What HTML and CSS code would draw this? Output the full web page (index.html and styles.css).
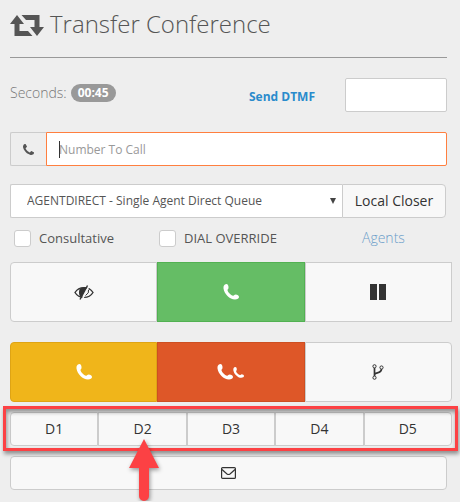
FILE: index.html
```html
<!DOCTYPE html>
<html lang="en">
<head>
    <meta charset="UTF-8">
    <meta name="viewport" content="width=device-width, initial-scale=1.0">
    <title>Transfer Conference</title>
    <link rel="stylesheet" href="styles.css">
</head>
<body>
    <svg class="sprite" aria-hidden="true">
        <symbol id="phone" viewBox="192 128 1408 1408">
            <path d="M1600 1240q0 27-10 70.5t-21 68.5q-21 50-122 106-94 51-186 51-27 0-53-3.5t-57.5-12.5-47-14.5-55.5-20.5-49-18q-98-35-175-83-127-79-264-216t-216-264q-48-77-83-175-3-9-18-49t-20.5-55.5-14.5-47-12.5-57.5-3.5-53q0-92 51-186 56-101 106-122 25-11 68.5-21t70.5-10q14 0 21 3 18 6 53 76 11 19 30 54t35 63.5 31 53.5q3 4 17.5 25t21.5 35.5 7 28.5q0 20-28.5 50t-62 55-62 53-28.5 46q0 9 5 22.5t8.5 20.5 14 24 11.5 19q76 137 174 235t235 174q2 1 19 11.5t24 14 20.5 8.5 22.5 5q18 0 46-28.5t53-62 55-62 50-28.5q14 0 28.5 7t35.5 21.5 25 17.5q25 15 53.5 31t63.5 35 54 30q70 35 76 53 3 7 3 21z"/>
        </symbol>
        <symbol id="handset" viewBox="0 0 16 16">
            <path d="M3.300 0C1.200.3.200 2 .5 4.600 1.200 9.800 6.600 15.600 12 15.600c2.300 0 4-.9 4-2.500 0-1.300-1.600-2.500-3.300-2.500-1.300 0-1.600 1.300-2.600 1.200C7.700 11.400 5 8.300 4.500 6.300c-.2-1 .9-1.200 1-2.400C5.700 2 4.900 0 3.300 0z"/>
        </symbol>
    </svg>

    <main class="panel">
        <h1 class="title">
            <svg class="title-icon" viewBox="0 0 34 21">
                <path d="M7 0l7 9H9.500v7H18l4.500 5H4.500V9H0z"/>
                <path d="M11.500 0H29.500v12H34l-7 9-7-9h4.500V5H16z"/>
            </svg>
            Transfer Conference
        </h1>

        <div class="timer-row">
            <div class="timer">Seconds: <span class="badge">00:45</span></div>
            <a class="dtmf-link" href="#">Send DTMF</a>
            <input class="dtmf-input" type="text" aria-label="DTMF digits">
        </div>

        <div class="number-row">
            <label class="addon" for="number" aria-label="Number To Call">
                <svg class="icon-small"><use href="#phone"/></svg>
            </label>
            <div class="number-box">
                <input class="number-input" type="text" id="number" placeholder="Number To Call">
                <span class="caret"></span>
            </div>
        </div>

        <div class="queue-row">
            <div class="queue-box">
                <select class="queue-select" aria-label="Transfer group">
                    <option>AGENTDIRECT - Single Agent Direct Queue</option>
                </select>
            </div>
            <button class="btn closer-btn" type="button">Local Closer</button>
        </div>

        <div class="options">
            <label class="check"><input type="checkbox"> Consultative</label>
            <label class="check"><input type="checkbox"> DIAL OVERRIDE</label>
            <a class="agents-link" href="#">Agents</a>
        </div>

        <div class="actions">
            <button class="btn first" type="button" aria-label="Leave blind">
                <svg class="icon-eye" viewBox="0 0 20 15">
                    <path class="line" d="M1 7.500C5 1 15 1 19 7.500 15 14 5 14 1 7.500z" stroke-width="1.400"/>
                    <path d="M5.500 4.500C7 2.500 10 2 12.500 2.500L7 12.500C5 11 4.500 7 5.500 4.500z"/>
                    <path class="gap" d="M15.500 0L8 15" stroke-width="1.600"/>
                    <path class="line" d="M13.500.5L6 14.500" stroke-width="1.400"/>
                    <path class="line" d="M14.500 5q1 3-3 5.500" stroke-width="1"/>
                </svg>
            </button>
            <button class="btn green" type="button" aria-label="Dial with customer">
                <svg class="icon"><use href="#handset"/></svg>
            </button>
            <button class="btn" type="button" aria-label="Park customer and dial">
                <svg class="icon" viewBox="0 0 16 16"><path d="M0 0h7v16H0zM9 0h7v16H9z"/></svg>
            </button>
        </div>

        <div class="actions">
            <button class="btn first yellow" type="button" aria-label="Hangup transfer line">
                <svg class="icon"><use href="#handset"/></svg>
            </button>
            <button class="btn orange" type="button" aria-label="Hangup both lines">
                <svg class="icon"><use href="#handset"/></svg>
                <svg class="icon-small"><use href="#handset"/></svg>
            </button>
            <button class="btn last" type="button" aria-label="Leave 3-way call">
                <svg class="icon-fork" viewBox="0 0 12 16">
                    <path class="line" d="M2.500 4v8M9.500 5c0 5-7 3-7 6" stroke-width="1.700"/>
                    <circle class="ring" cx="2.500" cy="2.300" r="1.600"/>
                    <circle class="ring" cx="2.500" cy="13.700" r="1.600"/>
                    <circle class="ring" cx="9.500" cy="3.500" r="1.600"/>
                </svg>
            </button>
        </div>

        <div class="presets">
            <button class="btn" type="button">D1</button>
            <button class="btn" type="button">D2</button>
            <button class="btn" type="button">D3</button>
            <button class="btn" type="button">D4</button>
            <button class="btn" type="button">D5</button>
            <span class="highlight"></span>
            <svg class="arrow" viewBox="0 0 30 62">
                <path d="M15 0l15 29H20v28a5 5 0 0 1-10 0V29H0z"/>
            </svg>
        </div>

        <button class="btn mail-btn" type="button" aria-label="Voicemail message">
            <svg class="icon-mail" viewBox="0 0 15 12">
                <rect class="line" x=".6" y=".6" width="13.800" height="10.800" rx="1" stroke-width="1.200"/>
                <path class="line" d="M1 2.500l5 4.500q1.500 1 3 0l5-4.500" stroke-width="1.200"/>
            </svg>
        </button>
    </main>
</body>
</html>
```

FILE: styles.css
```css
* {
    margin: 0;
    padding: 0;
    box-sizing: border-box;
}

body {
    background: #eee;
    color: #555;
    font-family: 'Open Sans', sans-serif;
    font-size: 14px;
    line-height: 20px;
}

input,
select,
button {
    font: inherit;
    color: inherit;
}

svg {
    fill: currentColor;
    flex: none;
}

.line {
    fill: none;
    stroke: currentColor;
}

.ring {
    fill: #f8f8f8;
    stroke: currentColor;
}

.gap {
    fill: none;
    stroke: #f8f8f8;
}

a {
    color: #2a8bcc;
    text-decoration: none;
}

.sprite {
    display: none;
}

.panel {
    padding: 8px 8px 11px 10px;
}

.title {
    display: flex;
    align-items: center;
    gap: 6px;
    height: 50px;
    margin-right: 5px;
    padding-bottom: 18px;
    border-bottom: 1px solid #999;
    font-size: 24px;
    font-weight: 300;
}

.title-icon {
    width: 34px;
    height: 21px;
    margin-top: 3px;
}

.timer-row {
    display: flex;
    align-items: center;
    margin: 20px 5px 0 0;
}

.timer {
    flex: 1;
    align-self: flex-start;
    display: flex;
    align-items: center;
    gap: 4px;
    padding-top: 5px;
    color: #777;
    font-weight: 300;
}

.badge {
    padding: 0 7px;
    border-radius: 9px;
    background: #999;
    color: #fff;
    font-size: 12px;
    font-weight: 700;
    line-height: 18px;
}

.dtmf-link {
    margin: 4px 30px 0 0;
    font-size: 12px;
    font-weight: 700;
}

.dtmf-input {
    width: 102px;
    height: 34px;
    padding: 0 10px;
    border: 1px solid #ccc;
    border-radius: 2px;
    background: #fff;
}

.number-row {
    display: flex;
    margin: 20px 5px 0 0;
}

.addon {
    display: flex;
    align-items: center;
    justify-content: center;
    width: 36px;
    border: 1px solid #ccc;
    border-right: 0;
    border-radius: 2px 0 0 2px;
}

.number-box {
    position: relative;
    flex: 1;
}

.number-input {
    display: block;
    width: 100%;
    height: 34px;
    padding: 0 12px;
    border: 1px solid #ff7f3f;
    border-radius: 0 2px 2px 0;
    background: #fff;
    font-size: 12px;
}

.number-input::placeholder {
    color: #999;
}

.caret {
    position: absolute;
    top: 9px;
    left: 13px;
    width: 1px;
    height: 17px;
    background: #333;
}

.btn {
    display: flex;
    align-items: center;
    justify-content: center;
    border: 1px solid #ccc;
    background: #f8f8f8;
    color: #333;
    cursor: pointer;
}

.queue-row {
    display: flex;
    margin: 18px 6px 0 0;
}

.queue-box {
    position: relative;
    flex: 1;
}

.queue-box::after {
    content: "";
    position: absolute;
    top: 14px;
    right: 6px;
    border: 3px solid transparent;
    border-top: 6px solid #444;
    border-bottom: 0;
}

.queue-select {
    appearance: none;
    display: block;
    width: 100%;
    height: 34px;
    padding: 0 16px;
    border: 1px solid #ccc;
    border-right: 0;
    border-radius: 2px 0 0 2px;
    background: #fff;
    font-size: 12px;
}

.closer-btn {
    width: 104px;
    border-radius: 0 4px 4px 0;
}

.options {
    display: grid;
    grid-template-columns: 145px 1fr 90px;
    align-items: center;
    margin-top: 10px;
    padding-left: 4px;
}

.check {
    display: flex;
    align-items: center;
    gap: 8px;
    font-size: 13px;
}

.check input {
    appearance: none;
    width: 17px;
    height: 17px;
    border: 1px solid #ccc;
    border-radius: 3px;
    background: #fff;
}

.agents-link {
    color: #6b9dc9;
    font-weight: 300;
}

.actions {
    display: grid;
    grid-template-columns: repeat(3, 1fr);
    margin-top: 20px;
}

.options + .actions {
    margin-top: 14px;
}

.actions .btn {
    height: 60px;
}

.first {
    border-radius: 4px 0 0 4px;
}

.last {
    border-radius: 0 4px 4px 0;
}

.actions .green {
    border-color: #52b152;
    background: #65bd65;
    color: #fff;
}

.actions .yellow {
    border-color: #dfa414;
    background: #f0b51a;
    color: #fff;
}

.actions .orange {
    border-color: #cd4f22;
    background: #de5728;
    color: #fff;
}

.icon {
    width: 16px;
    height: 16px;
}

.icon-small {
    width: 11px;
    height: 11px;
}

.icon-eye {
    width: 20px;
    height: 15px;
}

.icon-fork {
    width: 12px;
    height: 16px;
}

.icon-mail {
    width: 15px;
    height: 12px;
}

.presets {
    position: relative;
    display: grid;
    grid-template-columns: repeat(5, 1fr);
    margin-top: 10px;
}

.presets .btn {
    height: 34px;
}

.presets .btn:first-child {
    border-radius: 4px 0 0 4px;
}

.presets .btn:nth-child(5) {
    border-radius: 0 4px 4px 0;
}

.highlight {
    position: absolute;
    inset: -6px -6px -5px -7px;
    border: 3px solid #fc4144;
    box-shadow: 1px 3px 4px rgba(0, 0, 0, 0.4), inset 1px 3px 4px rgba(0, 0, 0, 0.4);
    pointer-events: none;
}

.arrow {
    position: absolute;
    z-index: 1;
    top: 27px;
    left: 119px;
    width: 30px;
    height: 62px;
    fill: #fc4144;
    filter: drop-shadow(1px 2px 2px rgba(0, 0, 0, 0.4));
    pointer-events: none;
}

.mail-btn {
    width: calc(100% - 5px);
    height: 34px;
    margin-top: 10px;
    border-radius: 4px;
}
```
